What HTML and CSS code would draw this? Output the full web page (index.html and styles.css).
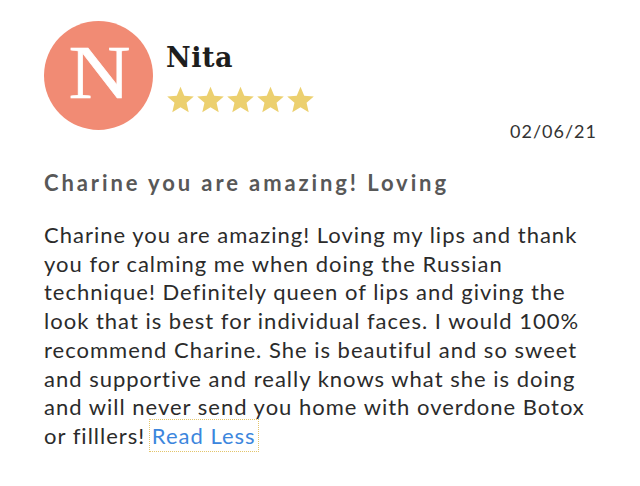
FILE: index.html
```html
<!DOCTYPE html>
<html>
<head>
<meta charset="utf-8">
<link rel="stylesheet" href="styles.css">
</head>
<body>
<div class="review">
  <div class="header">
    <div class="avatar"><span class="initial">N</span></div>
    <div class="meta">
      <div class="name">Nita</div>
      <div class="stars">
        <svg class="star" viewBox="0 0 24 24"><path d="M12 1.5l3.1 7.3 7.9.7-6 5.2 1.8 7.8L12 18.4l-6.8 4.1 1.8-7.8-6-5.2 7.9-.7z"/></svg>
        <svg class="star" viewBox="0 0 24 24"><path d="M12 1.5l3.1 7.3 7.9.7-6 5.2 1.8 7.8L12 18.4l-6.8 4.1 1.8-7.8-6-5.2 7.9-.7z"/></svg>
        <svg class="star" viewBox="0 0 24 24"><path d="M12 1.5l3.1 7.3 7.9.7-6 5.2 1.8 7.8L12 18.4l-6.8 4.1 1.8-7.8-6-5.2 7.9-.7z"/></svg>
        <svg class="star" viewBox="0 0 24 24"><path d="M12 1.5l3.1 7.3 7.9.7-6 5.2 1.8 7.8L12 18.4l-6.8 4.1 1.8-7.8-6-5.2 7.9-.7z"/></svg>
        <svg class="star" viewBox="0 0 24 24"><path d="M12 1.5l3.1 7.3 7.9.7-6 5.2 1.8 7.8L12 18.4l-6.8 4.1 1.8-7.8-6-5.2 7.9-.7z"/></svg>
      </div>
      <div class="date">02/06/21</div>
    </div>
  </div>
  <h2 class="title">Charine you are amazing! Loving</h2>
  <p class="text">Charine you are amazing! Loving my lips and thank you for calming me when doing the Russian technique! Definitely queen of lips and giving the look that is best for individual faces. I would 100% recommend Charine. She is beautiful and so sweet and supportive and really knows what she is doing and will never send you home with overdone Botox or filllers! <a class="more" href="#">Read Less</a></p>
</div>
</body>
</html>
```
FILE: styles.css
```css
html, body {
  margin: 0;
  padding: 0;
  background: #ffffff;
}
body {
  font-family: "Lato", "Liberation Sans", sans-serif;
  color: #2b2b2b;
}
.review {
  padding: 21px 50px 20px 44px;
}
.header {
  display: flex;
  gap: 14px;
}
.avatar {
  flex: 0 0 109px;
  width: 109px;
  height: 109px;
  border-radius: 50%;
  background: #f18b74;
  color: #ffffff;
  display: flex;
  align-items: center;
  justify-content: center;
}
.initial {
  display: block;
  font-family: "Liberation Serif", serif;
  font-size: 76px;
  line-height: 76px;
  transform: scaleX(1.13);
  -webkit-text-stroke: 0.6px #ffffff;
  margin-top: -8px;
  margin-left: 2px;
}
.meta {
  flex: 1;
  display: flex;
  flex-direction: column;
  margin-right: -6px;
}
.name {
  font-family: "DejaVu Serif", serif;
  font-weight: bold;
  font-size: 27px;
  line-height: 28px;
  margin-top: 23px;
  color: #1e1e1e;
  letter-spacing: 0.5px;
  margin-left: -1px;
}
.stars {
  display: flex;
  gap: 1px;
  margin-top: 13px;
  margin-left: -1px;
}
.star {
  width: 29px;
  height: 29px;
  fill: #ecd06f;
}
.date {
  align-self: flex-end;
  font-size: 18px;
  line-height: 22px;
  letter-spacing: 1px;
  margin-top: 6px;
  margin-right: -1px;
  color: #333333;
}
.title {
  margin: 28px 0 0 0;
  font-size: 22px;
  line-height: 26px;
  letter-spacing: 2.9px;
  font-weight: bold;
  color: #585858;
}
.text {
  margin: 25px 0 0 0;
  font-size: 22px;
  line-height: 28.7px;
  letter-spacing: 1px;
  color: #2b2b2b;
}
.more {
  color: #3c86dd;
  text-decoration: none;
  outline: 1px dotted #e3c56a;
  outline-offset: 2px;
}
```
